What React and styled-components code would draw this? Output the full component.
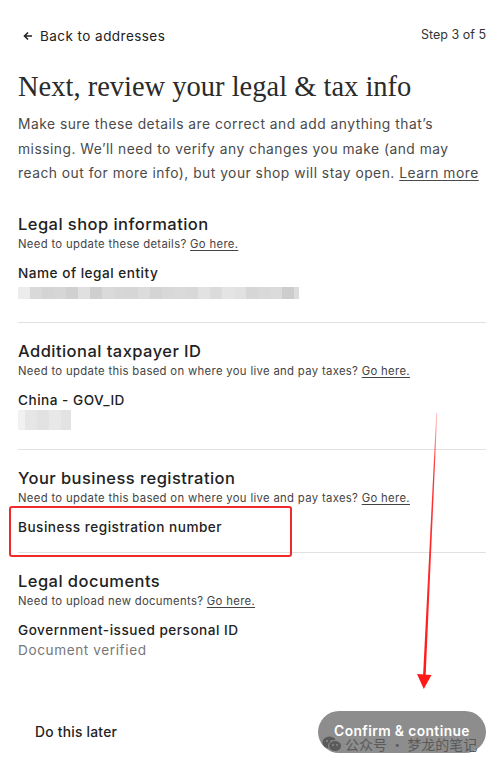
import React from 'react';
import styled, { createGlobalStyle } from 'styled-components';

const GlobalStyle = createGlobalStyle`
  body {
    margin: 0;
    background: #ffffff;
    font-family: Inter, "Noto Sans", sans-serif;
    color: #222222;
  }
`;

const Page = styled.div`
  position: relative;
  width: 499px;
  height: 766px;
  box-sizing: border-box;
  padding: 26px 13px 0 18px;
  overflow: hidden;
`;

const TopBar = styled.div`
  display: flex;
  justify-content: space-between;
  align-items: center;
  height: 20px;
`;

const BackLink = styled.a`
  display: flex;
  align-items: center;
  gap: 7px;
  padding-left: 5px;
  font-size: 13.5px;
  letter-spacing: 0.45px;
  color: #222;
  text-decoration: none;
`;

const StepText = styled.span`
  font-size: 12.5px;
  color: #333;
  margin-top: -3px;
`;

const Title = styled.h1`
  margin: 23px 0 0;
  font-family: "Liberation Serif", serif;
  font-weight: 400;
  font-size: 28.5px;
  line-height: 36px;
  color: #2b2b2b;
`;

const Intro = styled.p`
  margin: 7px 0 0;
  font-size: 13.8px;
  line-height: 24.5px;
  color: #4a4a4a;
  letter-spacing: 0.5px;
`;

const Underlined = styled.a`
  color: inherit;
  text-decoration: underline;
  text-underline-offset: 2px;
`;

const Section = styled.section`
  position: relative;
  padding: 16px 0 ${(p) => (p.$bottom !== undefined ? p.$bottom : 19)}px;
  border-bottom: ${(p) => (p.$last ? 'none' : '1px solid #e1e1e1')};
  margin-top: ${(p) => (p.$first ? 10 : 0)}px;
`;

const SectionTitle = styled.h2`
  margin: 0;
  font-size: 16.5px;
  font-weight: 500;
  line-height: 24px;
  letter-spacing: 0.45px;
  color: #222;
`;

const Hint = styled.div`
  font-size: 11.3px;
  line-height: 16px;
  letter-spacing: 0.33px;
  color: #444;
`;

const FieldLabel = styled.div`
  margin-top: 11px;
  font-size: 13.6px;
  font-weight: 500;
  line-height: 20px;
  letter-spacing: 0.5px;
  color: #222;
`;

const FieldValue = styled.div`
  font-size: 13.6px;
  line-height: 20px;
  color: ${(p) => (p.$muted ? '#777' : '#222')};
  letter-spacing: 0.6px;
`;

const Mosaic = styled.div`
  display: flex;
  height: 20px;
  align-items: center;
`;

const Cell = styled.span`
  display: block;
  width: ${(p) => p.$w}px;
  height: ${(p) => p.$h}px;
  background: ${(p) => p.$c};
`;

const Highlight = styled.div`
  position: absolute;
  left: -9px;
  top: 56px;
  width: 279px;
  height: 47px;
  border: 2px solid #f02a2a;
  border-radius: 3px;
`;

const Footer = styled.div`
  display: flex;
  justify-content: space-between;
  align-items: center;
  margin-top: 32px;
`;

const LaterButton = styled.button`
  border: none;
  background: none;
  padding: 0 0 0 17px;
  font-family: inherit;
  font-size: 13.8px;
  font-weight: 500;
  letter-spacing: 0.25px;
  color: #222;
`;

const ConfirmButton = styled.button`
  position: relative;
  width: 168px;
  height: 42px;
  border: none;
  border-radius: 21px;
  background: #8d8d8d;
  color: #fff;
  font-family: inherit;
  font-size: 13.8px;
  font-weight: 600;
  letter-spacing: 0.4px;
  padding: 0 0 1px;
`;

const Watermark = styled.div`
  position: absolute;
  left: 4px;
  bottom: 0px;
  display: flex;
  align-items: center;
  gap: 3px;
  font-family: "Noto Sans CJK SC", sans-serif;
  font-size: 14px;
  line-height: 18px;
  font-weight: 400;
  letter-spacing: 0;
  color: #5a5a5a;
  white-space: nowrap;
`;

const ArrowLayer = styled.svg`
  position: absolute;
  left: 0;
  top: 0;
  pointer-events: none;
`;

const blur1 = [
  ['#ececec', 12], ['#d9d9d9', 12], ['#d4d4d4', 12], ['#d6d6d6', 12], ['#d0d0d0', 12],
  ['#e0e0e0', 12], ['#cfcfcf', 12], ['#dadada', 12], ['#d7d7d7', 12], ['#d6d6d6', 12],
  ['#dcdcdc', 12], ['#d4d4d4', 12], ['#d8d8d8', 12], ['#dadada', 12], ['#d8d8d8', 12],
  ['#e2e2e2', 12], ['#dbdbdb', 12], ['#e4e4e4', 12], ['#e1e1e1', 12], ['#d6d6d6', 12],
  ['#d9d9d9', 12], ['#dbdbdb', 12], ['#cdcdcd', 12], ['#dcdcdc', 5],
];

const blur2 = [
  ['#f1f1f1', 7], ['#e6e6e6', 12], ['#e2e2e2', 12], ['#e8e8e8', 12], ['#e3e3e3', 10],
];

function WechatIcon() {
  return (
    <svg width="20" height="16" viewBox="0 0 20 16">
      <ellipse cx="7.5" cy="6.5" rx="7" ry="6" fill="#5a5a5a" />
      <ellipse cx="13" cy="10" rx="6.5" ry="5.5" fill="#5a5a5a" stroke="#8d8d8d" strokeWidth="1" />
      <circle cx="5" cy="5" r="1" fill="#8d8d8d" />
      <circle cx="9.5" cy="5" r="1" fill="#8d8d8d" />
      <circle cx="11" cy="9" r="0.9" fill="#8d8d8d" />
      <circle cx="15" cy="9" r="0.9" fill="#8d8d8d" />
    </svg>
  );
}

function LeftArrow() {
  return (
    <svg width="10" height="10" viewBox="0 0 10 10">
      <path d="M9 5H1.8M5 1.5L1.5 5L5 8.5" stroke="#222" strokeWidth="1.6" fill="none" />
    </svg>
  );
}

export default function App() {
  return (
    <>
      <GlobalStyle />
      <Page>
        <TopBar>
          <BackLink href="#">
            <LeftArrow />
            Back to addresses
          </BackLink>
          <StepText>Step 3 of 5</StepText>
        </TopBar>

        <Title>Next, review your legal &amp; tax info</Title>
        <Intro>
          Make sure these details are correct and add anything that’s missing. We’ll need to verify
          any changes you make (and may reach out for more info), but your shop will stay open.{' '}
          <Underlined href="#">Learn more</Underlined>
        </Intro>

        <Section $first>
          <SectionTitle>Legal shop information</SectionTitle>
          <Hint>
            Need to update these details? <Underlined href="#">Go here.</Underlined>
          </Hint>
          <FieldLabel>Name of legal entity</FieldLabel>
          <Mosaic>
            {blur1.map(([c, w], i) => (
              <Cell key={i} $c={c} $w={w} $h={12} />
            ))}
          </Mosaic>
        </Section>

        <Section>
          <SectionTitle>Additional taxpayer ID</SectionTitle>
          <Hint>
            Need to update this based on where you live and pay taxes?{' '}
            <Underlined href="#">Go here.</Underlined>
          </Hint>
          <FieldLabel>China - GOV_ID</FieldLabel>
          <Mosaic>
            {blur2.map(([c, w], i) => (
              <Cell key={i} $c={c} $w={w} $h={20} />
            ))}
          </Mosaic>
        </Section>

        <Section $bottom={15}>
          <SectionTitle>Your business registration</SectionTitle>
          <Hint>
            Need to update this based on where you live and pay taxes?{' '}
            <Underlined href="#">Go here.</Underlined>
          </Hint>
          <FieldLabel>Business registration number</FieldLabel>
          <Highlight />
        </Section>

        <Section $last>
          <SectionTitle>Legal documents</SectionTitle>
          <Hint>
            Need to upload new documents? <Underlined href="#">Go here.</Underlined>
          </Hint>
          <FieldLabel>Government-issued personal ID</FieldLabel>
          <FieldValue $muted>Document verified</FieldValue>
        </Section>

        <Footer>
          <LaterButton>Do this later</LaterButton>
          <ConfirmButton>
            Confirm &amp; continue
            <Watermark>
              <WechatIcon />
              公众号 · 梦龙的笔记
            </Watermark>
          </ConfirmButton>
        </Footer>

        <ArrowLayer width="499" height="766" viewBox="0 0 499 766">
          <defs>
            <linearGradient id="arrowFade" x1="0" y1="0" x2="0" y2="1">
              <stop offset="0" stopColor="#ff3030" stopOpacity="0.3" />
              <stop offset="0.2" stopColor="#ff2020" stopOpacity="0.9" />
              <stop offset="1" stopColor="#ff1a1a" />
            </linearGradient>
          </defs>
          <path d="M436.3 413 L437.2 413 L425.6 677 L423 677 Z" fill="url(#arrowFade)" />
          <path d="M417 674 L431.5 675 L423.8 689 Z" fill="#ff1a1a" />
        </ArrowLayer>
      </Page>
    </>
  );
}
